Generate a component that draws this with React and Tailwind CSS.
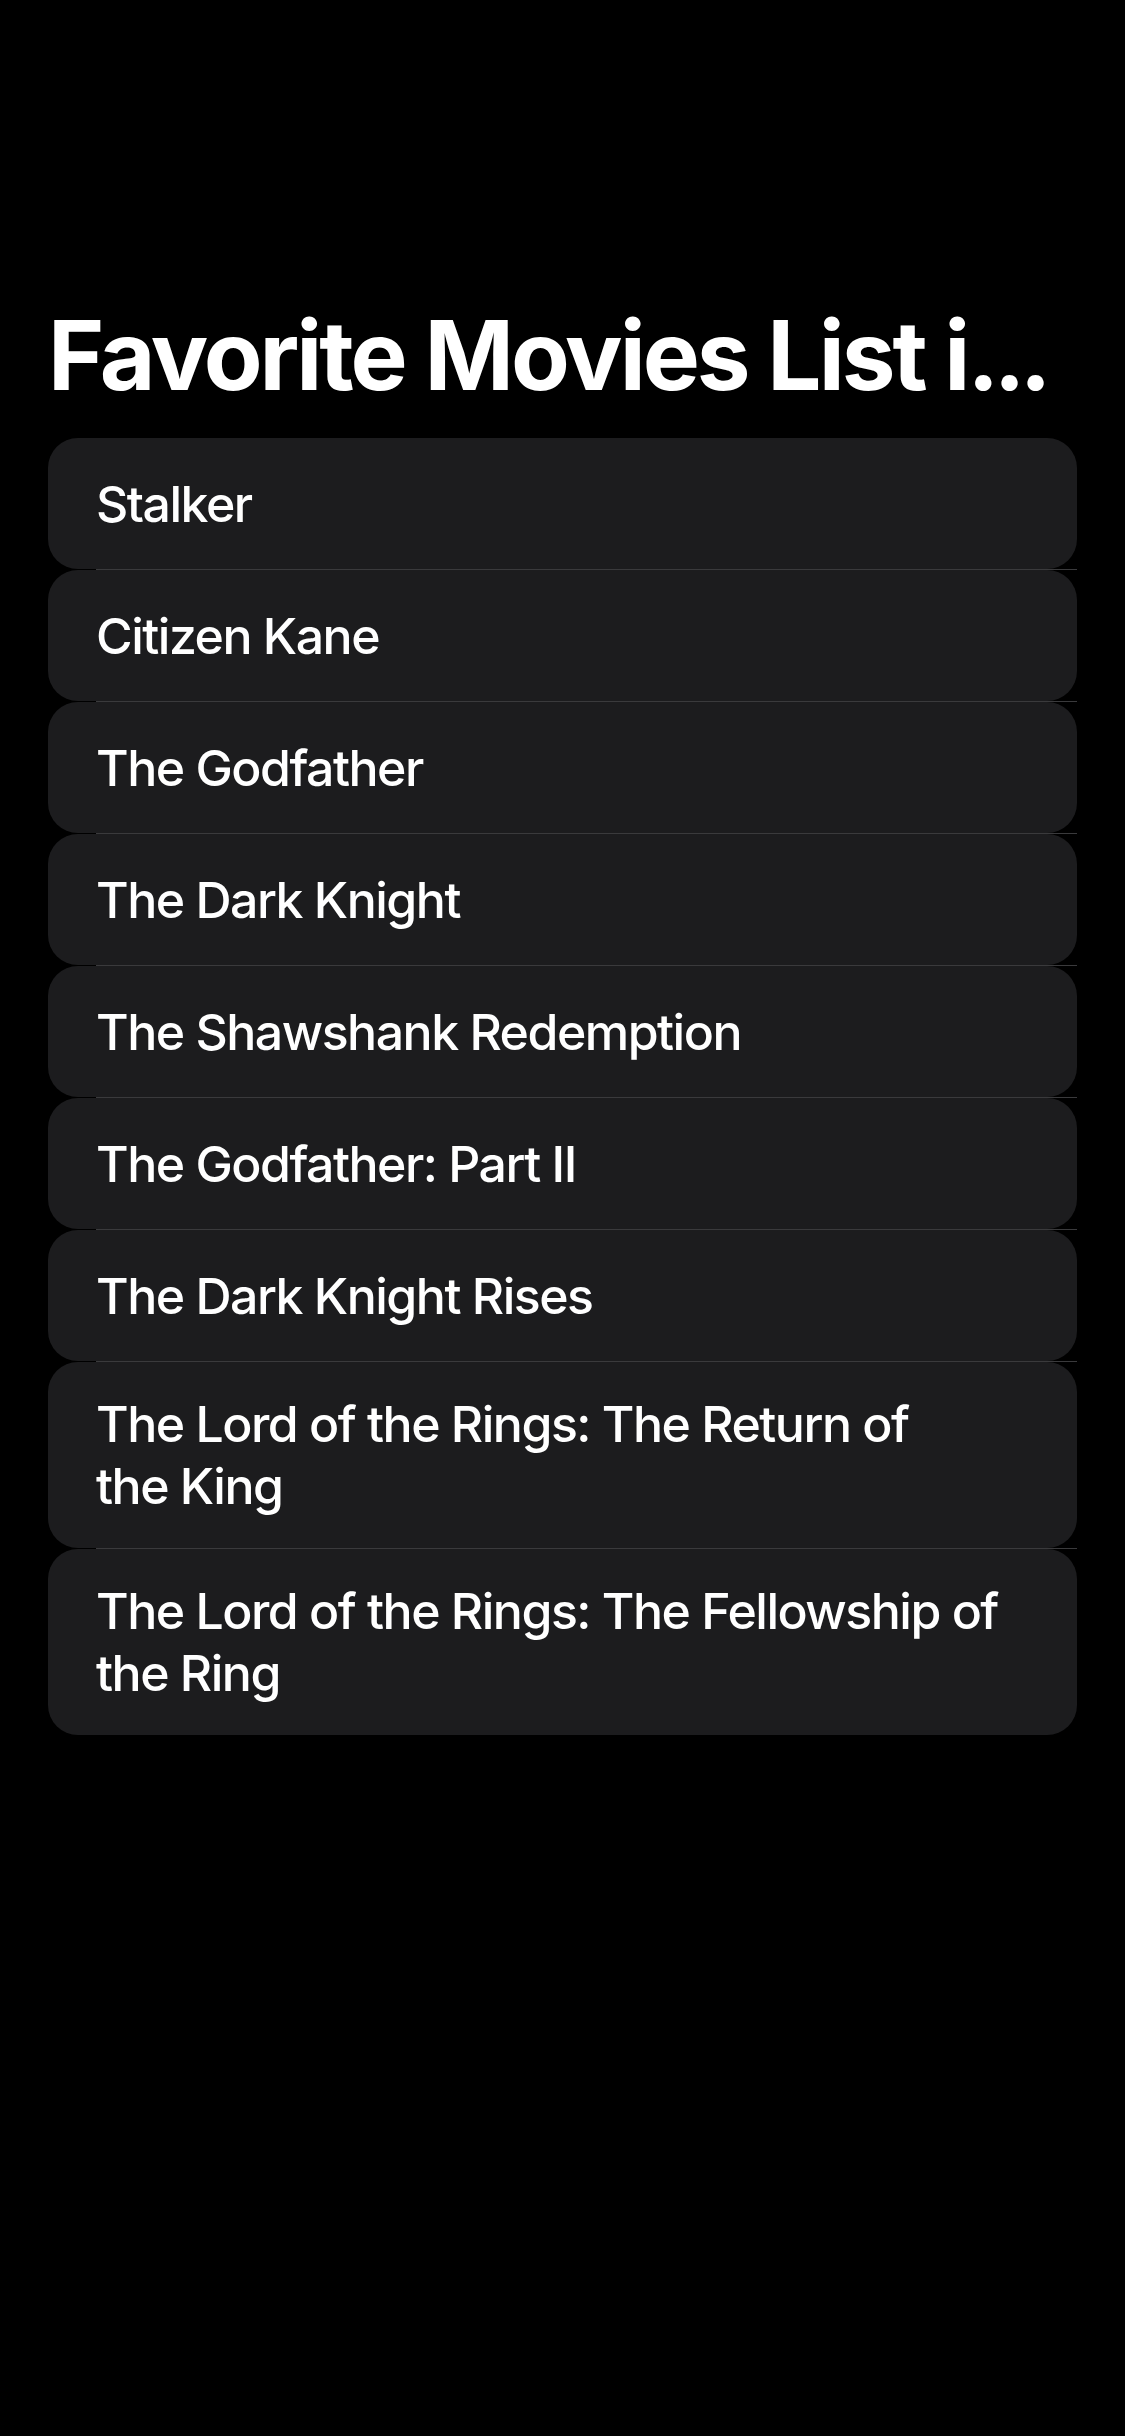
const movies = [
  "Stalker",
  "Citizen Kane",
  "The Godfather",
  "The Dark Knight",
  "The Shawshank Redemption",
  "The Godfather: Part II",
  "The Dark Knight Rises",
  "The Lord of the Rings: The Return of the\u00a0King",
  "The Lord of the Rings: The Fellowship of the\u00a0Ring",
];

export default function App() {
  return (
    <div
      className="min-h-[2436px] w-[1125px] bg-black text-white"
      style={{ fontFamily: "Inter, 'Noto Sans', sans-serif" }}
    >
      {/* large navigation title */}
      <h1 className="px-[48px] pt-[294px] mb-[22px] text-[96px] leading-[122px] font-bold tracking-[-3px] whitespace-nowrap">
        Favorite Movies List i<span className="tracking-[-6px]">...</span>
      </h1>

      {/* list rows, each one its own rounded cell */}
      <div className="px-[48px] flex flex-col">
        {movies.map((movie, i) => (
          <div key={movie}>
            <div className="min-h-[131px] flex items-center rounded-[30px] bg-[#1c1c1e] pl-[48px] pr-[56px] py-[31px]">
              <p className="text-[50px] leading-[62px] font-medium tracking-[-1.5px]">
                {movie}
              </p>
            </div>
            {i < movies.length - 1 && (
              <div className="ml-[48px] h-px bg-[#3a3a3c]" />
            )}
          </div>
        ))}
      </div>
    </div>
  );
}
